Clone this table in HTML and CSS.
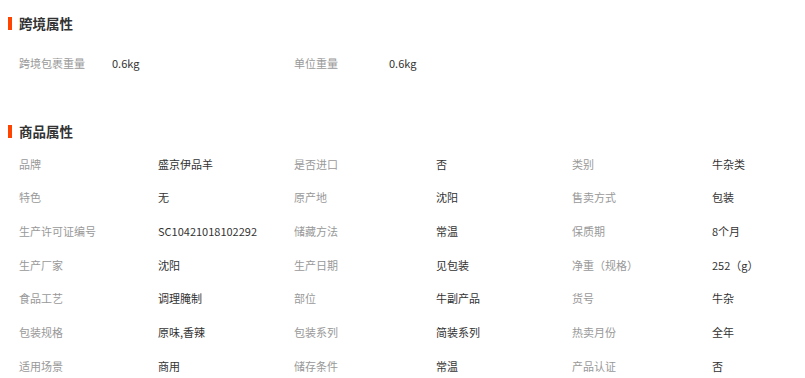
FILE: index.html
```html
<!DOCTYPE html>
<html lang="zh-CN">
<head>
<meta charset="utf-8">
<title>属性</title>
<link rel="stylesheet" href="styles.css">
</head>
<body>
<div class="page">
  <section class="block">
    <h2 class="title">跨境属性</h2>
    <div class="grid grid-cross">
      <span class="lbl">跨境包裹重量</span><span class="val">0.6kg</span>
      <span class="lbl">单位重量</span><span class="val">0.6kg</span>
    </div>
  </section>
  <section class="block block-goods">
    <h2 class="title">商品属性</h2>
    <div class="grid grid-goods">
      <span class="lbl">品牌</span><span class="val">盛京伊品羊</span>
      <span class="lbl">是否进口</span><span class="val">否</span>
      <span class="lbl">类别</span><span class="val">牛杂类</span>

      <span class="lbl">特色</span><span class="val">无</span>
      <span class="lbl">原产地</span><span class="val">沈阳</span>
      <span class="lbl">售卖方式</span><span class="val">包装</span>

      <span class="lbl">生产许可证编号</span><span class="val">SC10421018102292</span>
      <span class="lbl">储藏方法</span><span class="val">常温</span>
      <span class="lbl">保质期</span><span class="val">8个月</span>

      <span class="lbl">生产厂家</span><span class="val">沈阳</span>
      <span class="lbl">生产日期</span><span class="val">见包装</span>
      <span class="lbl">净重（规格）</span><span class="val">252（g）</span>

      <span class="lbl">食品工艺</span><span class="val">调理腌制</span>
      <span class="lbl">部位</span><span class="val">牛副产品</span>
      <span class="lbl">货号</span><span class="val">牛杂</span>

      <span class="lbl">包装规格</span><span class="val">原味,香辣</span>
      <span class="lbl">包装系列</span><span class="val">简装系列</span>
      <span class="lbl">热卖月份</span><span class="val">全年</span>

      <span class="lbl">适用场景</span><span class="val">商用</span>
      <span class="lbl">储存条件</span><span class="val">常温</span>
      <span class="lbl">产品认证</span><span class="val">否</span>
    </div>
  </section>
</div>
</body>
</html>
```
FILE: styles.css
```css
html, body {
  margin: 0;
  padding: 0;
  background: #ffffff;
}
body {
  font-family: "Noto Sans CJK SC", "Noto Sans", sans-serif;
  font-size: 11px;
  color: #333333;
  overflow: hidden;
}
.page {
  padding-top: 13px;
}
.title {
  margin: 0;
  height: 20px;
  display: flex;
  align-items: center;
  padding-left: 8px;
  font-size: 13.5px;
  font-weight: bold;
  color: #333333;
  line-height: 20px;
}
.title::before {
  content: "";
  display: block;
  width: 4px;
  height: 13px;
  background: #ff4400;
  margin-right: 7px;
}
.grid {
  display: grid;
  padding-left: 19px;
  align-items: center;
}
.grid-cross {
  margin-top: 13px;
  grid-template-columns: 93px 182px 95px 1fr;
  grid-auto-rows: 34px;
}
.block-goods {
  margin-top: 41px;
}
.grid-goods {
  margin-top: 6px;
  grid-template-columns: 139px 136px 142px 136px 140px 1fr;
  grid-auto-rows: 33.67px;
}
.lbl {
  color: #999999;
  white-space: nowrap;
}
.val {
  color: #333333;
  white-space: nowrap;
}
```
